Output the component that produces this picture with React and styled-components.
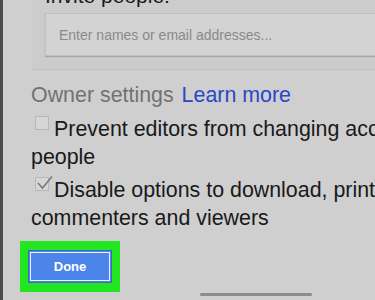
import React from 'react'
import styled, { createGlobalStyle } from 'styled-components'

const GlobalStyle = createGlobalStyle`
  html, body {
    margin: 0;
    padding: 0;
    background: #cfcfcf;
    overflow: hidden;
  }
`

function CheckMark() {
  return (
    <Mark width="18" height="16" viewBox="0 0 18 16">
      <path d="M2 8 L6.5 13 L16 1.5" fill="none" stroke="#7a7a7a" strokeWidth="1.6" />
    </Mark>
  )
}

function App() {
  return (
    <Page>
      <GlobalStyle />
      <InvitePanel>
        <InviteLabel>Invite people:</InviteLabel>
        <InviteInput>Enter names or email addresses...</InviteInput>
      </InvitePanel>

      <Settings>
        <SettingsTitle>
          Owner settings <LearnMore>Learn more</LearnMore>
        </SettingsTitle>
        <Option>
          <Box />
          <Line>Prevent editors from changing access and adding new</Line>
          <br />
          people
        </Option>
        <Option>
          <Box>
            <CheckMark />
          </Box>
          <Line>Disable options to download, print, and copy for</Line>
          <br />
          commenters and viewers
        </Option>
      </Settings>

      <Highlight>
        <DoneButton>Done</DoneButton>
      </Highlight>
      <HomeBar />
    </Page>
  )
}

export default App

const Page = styled.div`
  width: 375px;
  height: 300px;
  box-sizing: border-box;
  border-left: 3px solid #4b4b4b;
  overflow: hidden;
  font-family: "Liberation Sans", Arial, sans-serif;
  color: #1a1a1a;
`

const InvitePanel = styled.div`
  display: flex;
  flex-direction: column;
  margin-left: 29px;
  padding: 0 0 13px 13px;
  height: 70px;
  box-sizing: border-box;
  background: #cccccc;
  border-bottom: 1px solid #c1c1c1;
`

const InviteLabel = styled.div`
  margin-top: -16px;
  font-size: 21px;
  line-height: 24px;
  white-space: nowrap;
`

const InviteInput = styled.div`
  margin-top: 5px;
  height: 43px;
  flex-shrink: 0;
  box-sizing: border-box;
  display: flex;
  align-items: center;
  padding-left: 13px;
  background: #d3d3d3;
  border: 1px solid #bfbfbf;
  border-right: none;
  box-shadow: 0 1px 1px rgba(0, 0, 0, 0.18);
  font-size: 14px;
  color: #8a8a8a;
  white-space: nowrap;
`

const Settings = styled.div`
  padding: 11px 0 0 28px;
  display: flex;
  flex-direction: column;
  gap: 5px;
  font-size: 21.4px;
  line-height: 28px;
`

const SettingsTitle = styled.div`
  color: #727272;
  white-space: nowrap;
  margin-bottom: 1px;
`

const LearnMore = styled.span`
  color: #2a48c4;
  margin-left: 2px;
`

const Option = styled.div`
  white-space: nowrap;
`

const Line = styled.span`
  white-space: nowrap;
`

const Box = styled.span`
  position: relative;
  display: inline-block;
  width: 14px;
  height: 14px;
  box-sizing: border-box;
  margin: 0 5px 0 4px;
  vertical-align: 6px;
  border: 1px solid #b8b8b8;
  background: #d6d6d6;
`

const Mark = styled.svg`
  position: absolute;
  left: 0;
  top: -3px;
`

const Highlight = styled.div`
  margin: 9px 0 0 17px;
  width: 100px;
  height: 51px;
  box-sizing: border-box;
  padding: 9px 8px;
  background: #22e622;
`

const DoneButton = styled.div`
  height: 33px;
  box-sizing: border-box;
  display: flex;
  align-items: center;
  justify-content: center;
  background: #4c84ea;
  border: 1px solid #3b6cc9;
  box-shadow: inset 0 0 0 1px #4c84ea, inset 0 0 0 2px #eef3ff;
  color: #ffffff;
  font-size: 13px;
  font-weight: bold;
`

const HomeBar = styled.div`
  margin: 1px 0 0 197px;
  width: 112px;
  height: 3px;
  border-radius: 2px;
  background: #8c8c8c;
`
